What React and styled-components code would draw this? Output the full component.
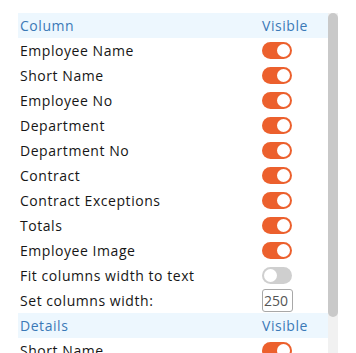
import React, { useState } from "react";
import styled, { createGlobalStyle } from "styled-components";

const GlobalStyle = createGlobalStyle`
  body {
    margin: 0;
    background: #fff;
    font-family: "Open Sans", "Liberation Sans", sans-serif;
  }
`;

const Page = styled.div`
  padding: 13px 18px 0;
`;

const Panel = styled.div`
  display: flex;
  width: 320px;
  height: 340px;
  overflow: hidden;
`;

const Table = styled.div`
  flex: 1;
  padding-bottom: 5px;
`;

const ScrollTrack = styled.div`
  flex: 0 0 10px;
  background: #f1f1f1;
`;

const ScrollThumb = styled.div`
  height: 304px;
  border-radius: 5px;
  background: #c9c9c9;
`;

const Row = styled.div`
  display: grid;
  grid-template-columns: 1fr 66px;
  align-items: center;
  height: 25px;
  padding-left: 2px;
  background: ${(p) => (p.$head ? "#edf7fe" : "transparent")};
  color: ${(p) => (p.$head ? "#3b79b7" : "#161616")};
  font-size: 14px;
  font-weight: ${(p) => (p.$head ? 500 : 400)};
  letter-spacing: 0.55px;
`;

const Track = styled.button`
  position: relative;
  width: 30px;
  height: 17px;
  padding: 0;
  border: none;
  border-radius: 9px;
  background: ${(p) => (p.$on ? "#ec602d" : "#cfcfcf")};
  cursor: pointer;
  &::after {
    content: "";
    position: absolute;
    top: 2px;
    left: ${(p) => (p.$on ? "15px" : "2px")};
    width: 13px;
    height: 13px;
    border-radius: 50%;
    background: #fff;
  }
`;

const WidthInput = styled.input`
  width: 31px;
  height: 23px;
  box-sizing: border-box;
  border: 1px solid #a8a8a8;
  border-radius: 3px;
  padding: 0 1px;
  font-family: inherit;
  font-size: 14px;
  color: #555;
  outline: none;
`;

const Toggle = ({ initial = true }) => {
  const [on, setOn] = useState(initial);
  return <Track $on={on} onClick={() => setOn(!on)} />;
};

const columns = [
  "Employee Name",
  "Short Name",
  "Employee No",
  "Department",
  "Department No",
  "Contract",
  "Contract Exceptions",
  "Totals",
  "Employee Image",
];

const details = ["Short Name", "Employee No"];

const App = () => (
  <Page>
    <GlobalStyle />
    <Panel>
      <Table>
        <Row $head>
          <span>Column</span>
          <span>Visible</span>
        </Row>
        {columns.map((c) => (
          <Row key={c}>
            <span>{c}</span>
            <Toggle />
          </Row>
        ))}
        <Row>
          <span>Fit columns width to text</span>
          <Toggle initial={false} />
        </Row>
        <Row>
          <span>Set columns width:</span>
          <WidthInput defaultValue="250" />
        </Row>
        <Row $head>
          <span>Details</span>
          <span>Visible</span>
        </Row>
        {details.map((c) => (
          <Row key={c}>
            <span>{c}</span>
            <Toggle />
          </Row>
        ))}
      </Table>
      <ScrollTrack>
        <ScrollThumb />
      </ScrollTrack>
    </Panel>
  </Page>
);

export default App;
